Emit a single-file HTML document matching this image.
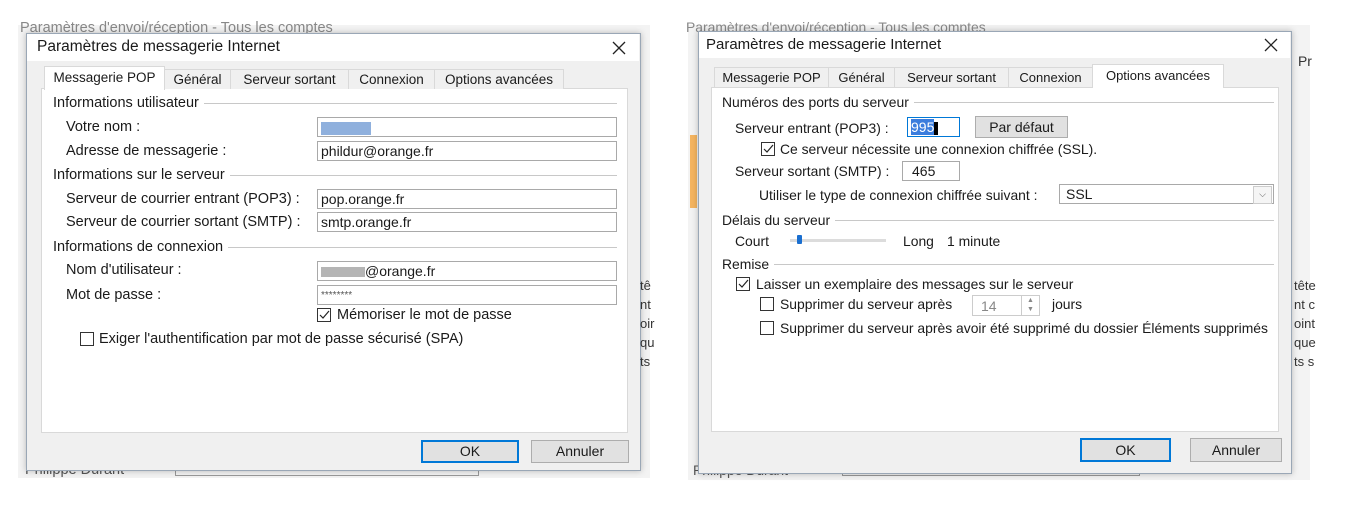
<!DOCTYPE html>
<html><head><meta charset="utf-8"><style>
body{margin:0;width:1354px;height:514px;background:#fff;position:relative;overflow:hidden;font-family:"Liberation Sans",sans-serif;font-size:14.5px;color:#1a1a1a}
.r{font-size:13.9px}
.a{position:absolute;white-space:nowrap}
.bg{position:absolute;background:#f3f3f3}
.dlg{position:absolute;background:#f0f0f0;border:1px solid #9aa7b6;box-shadow:0 0 6px rgba(0,0,0,.25)}
.tb{position:absolute;background:#fff}
.panel{position:absolute;background:#fff;border:1px solid #d9d9d9}
.tab{position:absolute;background:#f0f0f0;border:1px solid #d9d9d9;border-bottom:none;height:19px;line-height:19px;text-align:center;font-size:13.5px;white-space:nowrap}
.r .tab{font-size:13px}
.tab.s{background:#fff;height:23px;line-height:21px;z-index:2}
.inp{position:absolute;background:#fff;border:1px solid #a9a9a9;height:20px;line-height:19px;padding-left:3px;box-sizing:border-box;font-size:14px}
.h{position:absolute;display:flex;align-items:center;white-space:nowrap}
.h::after{content:"";flex:1;height:1px;background:#c8c8c8;margin-left:5px}
.cb{position:absolute;width:14px;height:14px;border:1px solid #333;background:#fff;box-sizing:border-box}
.ck{position:absolute;width:14px;height:14px}
.btn{position:absolute;background:#e1e1e1;border:1px solid #adadad;text-align:center;box-sizing:border-box;font-size:14px}
.btn.d{border:2px solid #0078d7}
</style></head><body>

<div class="bg" style="left:18px;top:25px;width:632px;height:453px;"></div>
<div class="a" style="left:20px;top:20px;color:#888">Paramètres d'envoi/réception - Tous les comptes</div>
<div class="bg" style="left:26px;top:140px;width:6px;height:70px;background:#f4b460"></div>
<div class="a" style="left:25px;top:462px;color:#555">Philippe Durant</div>
<div class="a" style="left:175px;top:465px;width:302px;height:10px;border:1px solid #999;border-top:none"></div>

<div class="dlg" style="left:26px;top:33px;width:613px;height:436px"></div>
<div class="tb" style="left:27px;top:34px;width:612px;height:27px"></div>
<div class="a" style="left:37px;top:38px;font-size:15.5px">Paramètres de messagerie Internet</div>
<svg class="a" style="left:612px;top:41px" width="14" height="14"><path d="M1 1L13 13M13 1L1 13" stroke="#222" stroke-width="1.3"/></svg>

<div class="panel" style="left:41px;top:88px;width:585px;height:343px"></div>
<div class="tab s" style="left:44px;top:66px;width:119px">Messagerie POP</div>
<div class="tab" style="left:164px;top:69px;width:65px">Général</div>
<div class="tab" style="left:230px;top:69px;width:117px">Serveur sortant</div>
<div class="tab" style="left:348px;top:69px;width:85px">Connexion</div>
<div class="tab" style="left:434px;top:69px;width:128px">Options avancées</div>

<div class="h" style="left:53px;top:95px;width:564px">Informations utilisateur</div>
<div class="a" style="left:66px;top:119px">Votre nom :</div>
<div class="inp" style="left:317px;top:117px;width:300px"><span style="display:inline-block;width:50px;height:13px;background:#8fb0dd;vertical-align:middle"></span></div>
<div class="a" style="left:66px;top:143px">Adresse de messagerie :</div>
<div class="inp" style="left:317px;top:141px;width:300px">phildur@orange.fr</div>
<div class="h" style="left:53px;top:167px;width:564px">Informations sur le serveur</div>
<div class="a" style="left:66px;top:191px">Serveur de courrier entrant (POP3) :</div>
<div class="inp" style="left:317px;top:189px;width:300px">pop.orange.fr</div>
<div class="a" style="left:66px;top:214px">Serveur de courrier sortant (SMTP) :</div>
<div class="inp" style="left:317px;top:212px;width:300px">smtp.orange.fr</div>
<div class="h" style="left:53px;top:239px;width:564px">Informations de connexion</div>
<div class="a" style="left:66px;top:262px">Nom d'utilisateur :</div>
<div class="inp" style="left:317px;top:261px;width:300px"><span style="display:inline-block;width:44px;height:10px;background:#b5b5b5;vertical-align:middle"></span>@orange.fr</div>
<div class="a" style="left:66px;top:287px">Mot de passe :</div>
<div class="inp" style="left:317px;top:285px;width:300px;font-size:10px;color:#555">********</div>
<div class="cb" style="left:317px;top:308px"></div><svg class="ck" style="left:317px;top:308px"><path d="M3 7L6 10L12 3" stroke="#222" fill="none" stroke-width="1.2"/></svg>
<div class="a" style="left:337px;top:307px">Mémoriser le mot de passe</div>
<div class="cb" style="left:80px;top:332px"></div>
<div class="a" style="left:99px;top:331px">Exiger l'authentification par mot de passe sécurisé (SPA)</div>
<div class="btn d" style="left:421px;top:440px;width:98px;height:23px;line-height:19px">OK</div>
<div class="btn" style="left:531px;top:440px;width:98px;height:23px;line-height:21px">Annuler</div>

<div class="r">
<div class="bg" style="left:688px;top:25px;width:622px;height:455px;"></div>
<div class="a" style="left:686px;top:19px;color:#888">Paramètres d'envoi/réception - Tous les comptes</div>
<div class="bg" style="left:690px;top:135px;width:7px;height:73px;background:#f4b460"></div>
<div class="a" style="left:1298px;top:53px;color:#333">Pr</div>
<div class="a" style="left:693px;top:462px;color:#555">Philippe Durant</div>
<div class="a" style="left:842px;top:465px;width:296px;height:10px;border:1px solid #999;border-top:none"></div>

<div class="dlg" style="left:698px;top:31px;width:592px;height:441px"></div>
<div class="tb" style="left:699px;top:32px;width:591px;height:26px"></div>
<div class="a" style="left:706px;top:36px;font-size:15px">Paramètres de messagerie Internet</div>
<svg class="a" style="left:1264px;top:38px" width="14" height="14"><path d="M1 1L13 13M13 1L1 13" stroke="#222" stroke-width="1.3"/></svg>

<div class="panel" style="left:711px;top:87px;width:566px;height:343px"></div>
<div class="tab" style="left:714px;top:67px;width:113px">Messagerie POP</div>
<div class="tab" style="left:828px;top:67px;width:65px">Général</div>
<div class="tab" style="left:894px;top:67px;width:113px">Serveur sortant</div>
<div class="tab" style="left:1008px;top:67px;width:83px">Connexion</div>
<div class="tab s" style="left:1092px;top:64px;width:130px">Options avancées</div>

<div class="h" style="left:722px;top:94px;width:552px">Numéros des ports du serveur</div>
<div class="a" style="left:735px;top:120px">Serveur entrant (POP3) :</div>
<div class="inp" style="left:907px;top:117px;width:53px;border-color:#0078d7"><span style="background:#3b7ddd;color:#fff">995</span><span style="display:inline-block;width:4px;height:13px;background:#000;vertical-align:middle"></span></div>
<div class="btn" style="left:975px;top:116px;width:93px;height:22px;line-height:20px">Par défaut</div>
<div class="cb" style="left:761px;top:142px"></div><svg class="ck" style="left:761px;top:142px"><path d="M3 7L6 10L12 3" stroke="#222" fill="none" stroke-width="1.2"/></svg>
<div class="a" style="left:780px;top:141px">Ce serveur nécessite une connexion chiffrée (SSL).</div>
<div class="a" style="left:735px;top:163px">Serveur sortant (SMTP) :</div>
<div class="inp" style="left:902px;top:161px;width:58px;padding-left:9px">465</div>
<div class="a" style="left:759px;top:187px">Utiliser le type de connexion chiffrée suivant :</div>
<div class="inp" style="left:1059px;top:184px;width:215px;padding-left:6px">SSL<span style="position:absolute;right:1px;top:1px;width:17px;height:16px;border:1px solid #ccc;background:#f5f5f5;font-size:9px;line-height:15px;text-align:center;color:#555">⌵</span></div>
<div class="h" style="left:722px;top:212px;width:552px">Délais du serveur</div>
<div class="a" style="left:735px;top:233px">Court</div>
<div class="a" style="left:790px;top:239px;width:96px;height:3px;background:#dcdcdc"></div>
<div class="a" style="left:797px;top:235px;width:5px;height:9px;background:#1a6fd0;border-radius:1px"></div>
<div class="a" style="left:903px;top:233px">Long</div><div class="a" style="left:947px;top:233px">1 minute</div>
<div class="h" style="left:722px;top:256px;width:552px">Remise</div>
<div class="cb" style="left:736px;top:277px"></div><svg class="ck" style="left:736px;top:277px"><path d="M3 7L6 10L12 3" stroke="#222" fill="none" stroke-width="1.2"/></svg>
<div class="a" style="left:756px;top:276px">Laisser un exemplaire des messages sur le serveur</div>
<div class="cb" style="left:760px;top:297px"></div>
<div class="a" style="left:780px;top:296px">Supprimer du serveur après</div>
<div class="inp" style="left:972px;top:295px;width:68px;height:21px;border-color:#ccc;color:#888;padding-left:8px;line-height:21px">14<span style="position:absolute;right:0;top:0;width:17px;height:19px;border-left:1px solid #ccc;font-size:7px;line-height:9px;text-align:center">▲<br>▼</span></div>
<div class="a" style="left:1052px;top:296px">jours</div>
<div class="cb" style="left:760px;top:321px"></div>
<div class="a" style="left:780px;top:320px">Supprimer du serveur après avoir été supprimé du dossier Éléments supprimés</div>
<div class="btn d" style="left:1080px;top:438px;width:91px;height:24px;line-height:20px">OK</div>
<div class="btn" style="left:1190px;top:438px;width:92px;height:24px;line-height:22px">Annuler</div>
<div class="a" style="left:1294px;top:276px;color:#333;line-height:19px;font-size:13px">tête<br>nt c<br>oint<br>que<br>ts s</div>
</div>
<div class="a" style="left:640px;top:276px;color:#333;line-height:19px;font-size:13px">tê<br>nt<br>oir<br>qu<br>ts</div>
</body></html>
